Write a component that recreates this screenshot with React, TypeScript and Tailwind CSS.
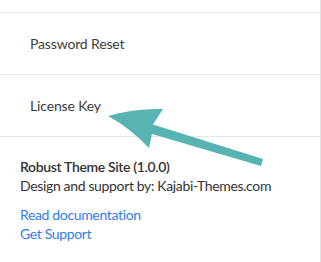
export default function App() {
  return (
    <div
      className="relative w-[321px] h-[262px] bg-white border-r border-[#e3e3e3] overflow-hidden"
      style={{ fontFamily: 'Lato, "Noto Sans", sans-serif' }}
    >
      <div className="h-[12px]" />
      <div className="border-t border-[#e6e6e6] h-[62px] flex items-center pl-[30px] text-[14px] tracking-[-0.15px] text-[#3d3d3d]">
        Password Reset
      </div>
      <div className="border-t border-b border-[#e6e6e6] h-[63px] flex items-center pl-[30px] text-[14px] tracking-[-0.15px] text-[#3d3d3d]">
        License Key
      </div>
      <div className="pl-[20px] pt-[20px] text-[14px] leading-[19px] tracking-[-0.35px]">
        <div className="font-semibold text-[#333333]">Robust Theme Site (1.0.0)</div>
        <div className="text-[#333333]">Design and support by: Kajabi-Themes.com</div>
        <div className="mt-[10px] text-[#2f7cf0]">Read documentation</div>
        <div className="text-[#2f7cf0]">Get Support</div>
      </div>
      <svg
        className="absolute left-0 top-0 pointer-events-none"
        width="321"
        height="262"
        viewBox="0 0 321 262"
      >
        <path
          d="M108,116 Q135,108 163,109 L153,124.5 L263,159 L261,166 L152,134 L149,148 Q130,128 108,116 Z"
          fill="#58b4b2"
        />
      </svg>
    </div>
  );
}
